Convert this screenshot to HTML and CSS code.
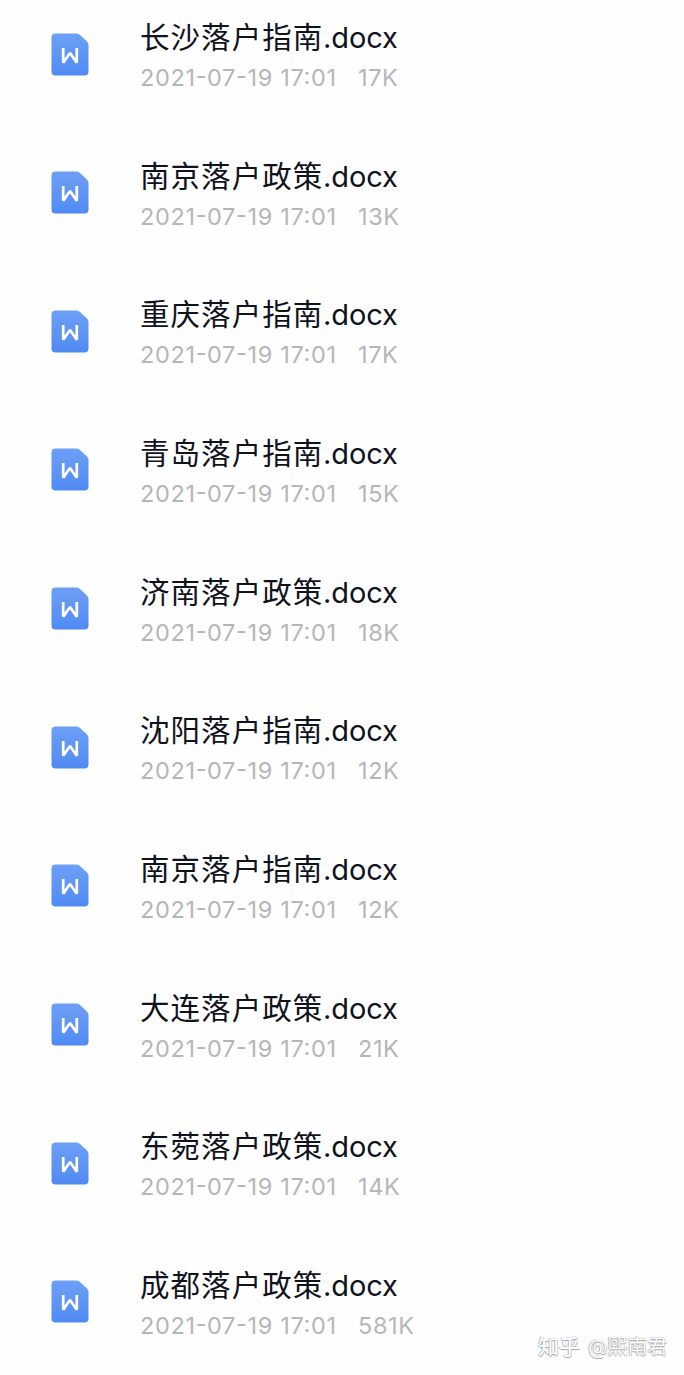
FILE: index.html
```
<!DOCTYPE html>
<html lang="zh-CN">
<head>
<meta charset="utf-8">
<title>落户政策</title>
<link rel="stylesheet" href="styles.css">
</head>
<body>
<svg class="defs" width="0" height="0" aria-hidden="true">
  <defs>
    <linearGradient id="blue" x1="0" y1="0" x2="0" y2="1"><stop offset="0" stop-color="#6d9ff5"/><stop offset="1" stop-color="#508af3"/></linearGradient>
    <symbol id="doc" viewBox="0 0 38 43">
      <path d="M4.5 .5H25.5Q27.5 .5 29 2L36 8.5Q37.5 10 37.5 12V38.5Q37.5 42.5 33.5 42.5H4.5Q.5 42.5 .5 38.5V4.5Q.5 .5 4.5 .5Z" fill="url(#blue)"/>
      <path d="M12.2 15V29.8L19 20L25.8 29.8V15" fill="none" stroke="#fff" stroke-width="2.7" stroke-linejoin="bevel"/>
    </symbol>
  </defs>
</svg>
<ul class="files">
  <li class="file"><svg class="icon"><use href="#doc"/></svg><div class="info"><div class="name"><span class="title">长沙落户指南</span><span class="ext">.docx</span></div><div class="meta"><span class="date">2021-07-19 17:01</span><span class="size">17K</span></div></div></li>
  <li class="file"><svg class="icon"><use href="#doc"/></svg><div class="info"><div class="name"><span class="title">南京落户政策</span><span class="ext">.docx</span></div><div class="meta"><span class="date">2021-07-19 17:01</span><span class="size">13K</span></div></div></li>
  <li class="file"><svg class="icon"><use href="#doc"/></svg><div class="info"><div class="name"><span class="title">重庆落户指南</span><span class="ext">.docx</span></div><div class="meta"><span class="date">2021-07-19 17:01</span><span class="size">17K</span></div></div></li>
  <li class="file"><svg class="icon"><use href="#doc"/></svg><div class="info"><div class="name"><span class="title">青岛落户指南</span><span class="ext">.docx</span></div><div class="meta"><span class="date">2021-07-19 17:01</span><span class="size">15K</span></div></div></li>
  <li class="file"><svg class="icon"><use href="#doc"/></svg><div class="info"><div class="name"><span class="title">济南落户政策</span><span class="ext">.docx</span></div><div class="meta"><span class="date">2021-07-19 17:01</span><span class="size">18K</span></div></div></li>
  <li class="file"><svg class="icon"><use href="#doc"/></svg><div class="info"><div class="name"><span class="title">沈阳落户指南</span><span class="ext">.docx</span></div><div class="meta"><span class="date">2021-07-19 17:01</span><span class="size">12K</span></div></div></li>
  <li class="file"><svg class="icon"><use href="#doc"/></svg><div class="info"><div class="name"><span class="title">南京落户指南</span><span class="ext">.docx</span></div><div class="meta"><span class="date">2021-07-19 17:01</span><span class="size">12K</span></div></div></li>
  <li class="file"><svg class="icon"><use href="#doc"/></svg><div class="info"><div class="name"><span class="title">大连落户政策</span><span class="ext">.docx</span></div><div class="meta"><span class="date">2021-07-19 17:01</span><span class="size">21K</span></div></div></li>
  <li class="file"><svg class="icon"><use href="#doc"/></svg><div class="info"><div class="name"><span class="title">东菀落户政策</span><span class="ext">.docx</span></div><div class="meta"><span class="date">2021-07-19 17:01</span><span class="size">14K</span></div></div></li>
  <li class="file"><svg class="icon"><use href="#doc"/></svg><div class="info"><div class="name"><span class="title">成都落户政策</span><span class="ext">.docx</span></div><div class="meta"><span class="date">2021-07-19 17:01</span><span class="size">581K</span></div></div></li>
</ul>
<div class="watermark"><span class="brand">知乎</span><span>@熙南君</span></div>
</body>
</html>
```
FILE: styles.css
```
body {
  margin: 0;
  height: 1375px;
  position: relative;
  overflow: hidden;
  background: #fefefe;
  font-family: Inter, "Noto Sans CJK SC", sans-serif;
}
.defs { position: absolute; }
.files {
  list-style: none;
  margin: 0;
  padding: 16px 0 0 51px;
}
.file {
  display: flex;
  align-items: flex-start;
  height: 138.67px;
}
.icon {
  width: 38px;
  height: 43px;
  margin-top: 16.5px;
  flex: none;
}
.info { margin-left: 51px; white-space: nowrap; }
.name {
  display: flex;
  height: 44px;
  line-height: 44px;
  font-size: 29px;
  color: #10121c;
}
.title {
  width: 183px;
  height: 39px;
  line-height: 39px;
  font-family: "Noto Sans CJK SC", sans-serif;
  font-size: 29.5px;
  letter-spacing: 1.05px;
}
.ext { letter-spacing: -0.1px; }
.meta {
  display: flex;
  height: 36px;
  line-height: 36px;
  font-size: 23.5px;
  color: #b5b6b9;
}
.date {
  width: 218px;
  letter-spacing: 0.65px;
  font-feature-settings: "case";
}
.size { letter-spacing: 0.6px; }
.watermark {
  position: absolute;
  left: 538px;
  top: 1332px;
  display: flex;
  gap: 8px;
  line-height: 30px;
  font-size: 20px;
  color: #fff;
  text-shadow: -0.5px -0.5px 1px #888, 0.5px 0.5px 1px #aaa;
}
.brand { font-size: 21px; font-weight: 500; }
```
